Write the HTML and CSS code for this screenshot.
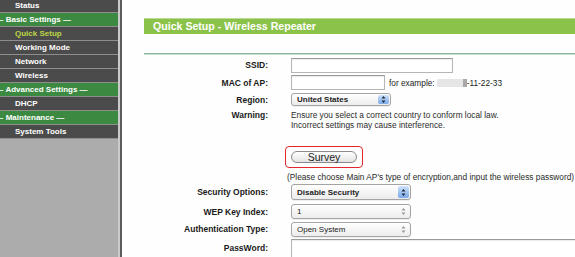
FILE: index.html
```html
<!DOCTYPE html>
<html lang="en">
<head>
    <meta charset="UTF-8">
    <meta name="viewport" content="width=device-width, initial-scale=1.0">
    <title>Quick Setup - Wireless Repeater</title>
    <link rel="stylesheet" href="styles.css">
</head>
<body>
    <div class="page">
        <nav class="menu">
            <div class="item first">Status</div>
            <div class="group">&ndash; Basic Settings &mdash;</div>
            <div class="item active">Quick Setup</div>
            <div class="item">Working Mode</div>
            <div class="item">Network</div>
            <div class="item">Wireless</div>
            <div class="group">&ndash; Advanced Settings &mdash;</div>
            <div class="item">DHCP</div>
            <div class="group">&ndash; Maintenance &mdash;</div>
            <div class="item">System Tools</div>
        </nav>
        <div class="divider"></div>

        <main class="content">
            <div class="title-bar">Quick Setup - Wireless Repeater</div>
            <div class="rule"></div>

            <form class="setup">
                <div class="row r-ssid">
                    <label>SSID:</label>
                    <div class="field"><input type="text" class="text ssid"></div>
                </div>
                <div class="row r-mac">
                    <label>MAC of AP:</label>
                    <div class="field">
                        <input type="text" class="text mac">
                        <span class="hint">for example:<span class="blur"></span><span class="blur dark"></span>-11-22-33</span>
                    </div>
                </div>
                <div class="row r-region">
                    <label>Region:</label>
                    <div class="field">
                        <div class="select region">
                            <span>United States</span>
                            <span class="stepper blue">
                                <svg width="5" height="9" viewBox="0 0 5 9"><path d="M0.5 3.5 L2.5 1 L4.5 3.5 Z M0.5 5.5 L2.5 8 L4.5 5.5 Z" fill="#1d2a3a"/></svg>
                            </span>
                        </div>
                    </div>
                </div>
                <div class="row r-warning">
                    <label>Warning:</label>
                    <div class="field note">
                        Ensure you select a correct country to conform local law.<br>
                        Incorrect settings may cause interference.
                    </div>
                </div>

                <div class="survey-wrap">
                    <div class="survey-box">
                        <button type="button" class="survey">Survey</button>
                    </div>
                    <p class="note please">(Please choose Main AP's type of encryption,and input the wireless password)</p>
                </div>

                <div class="row r-sec">
                    <label>Security Options:</label>
                    <div class="field">
                        <div class="select opt">
                            <span>Disable Security</span>
                            <span class="stepper blue">
                                <svg width="5" height="9" viewBox="0 0 5 9"><path d="M0.5 3.5 L2.5 1 L4.5 3.5 Z M0.5 5.5 L2.5 8 L4.5 5.5 Z" fill="#1d2a3a"/></svg>
                            </span>
                        </div>
                    </div>
                </div>
                <div class="row r-wep">
                    <label>WEP Key Index:</label>
                    <div class="field">
                        <div class="select opt flat">
                            <span>1</span>
                            <span class="stepper">
                                <svg width="5" height="9" viewBox="0 0 5 9"><path d="M0.5 3.5 L2.5 1 L4.5 3.5 Z M0.5 5.5 L2.5 8 L4.5 5.5 Z" fill="#9a9a9a"/></svg>
                            </span>
                        </div>
                    </div>
                </div>
                <div class="row r-auth">
                    <label>Authentication Type:</label>
                    <div class="field">
                        <div class="select opt flat">
                            <span>Open System</span>
                            <span class="stepper">
                                <svg width="5" height="9" viewBox="0 0 5 9"><path d="M0.5 3.5 L2.5 1 L4.5 3.5 Z M0.5 5.5 L2.5 8 L4.5 5.5 Z" fill="#9a9a9a"/></svg>
                            </span>
                        </div>
                    </div>
                </div>
                <div class="row r-pass">
                    <label>PassWord:</label>
                    <div class="field"><input type="text" class="text pass"></div>
                </div>
            </form>
        </main>
    </div>
</body>
</html>
```

FILE: styles.css
```css
body {
    margin: 0;
    background-color: #fdfefd;
    font-family: "Liberation Sans", Arial, sans-serif;
    overflow: hidden;
}
.page {
    display: flex;
    height: 257px;
}

/* left menu */
.menu {
    width: 118px;
    flex: none;
    background-color: #acacac;
    border-right: 2px solid #cbcbcb;
    font-size: 8px;
    font-weight: bold;
}
.item {
    height: 13px;
    line-height: 13px;
    padding-left: 15px;
    background-color: #4b4b4b;
    color: #fff;
    border-bottom: 1px solid #8e8e8e;
}
.item.first {
    height: 12px;
    line-height: 11px;
}
.item.active {
    color: #bcd646;
}
.group {
    height: 13px;
    line-height: 13px;
    padding-left: 1px;
    margin-left: -2px;
    background-color: #3c8a41;
    color: #fff;
    border-bottom: 1px solid #8e8e8e;
}
.divider {
    width: 2px;
    flex: none;
    background-color: #5c5c5c;
}

/* content */
.content {
    flex: 1;
    padding-left: 22px;
    padding-top: 18px;
    min-width: 0;
}
.title-bar {
    height: 15px;
    line-height: 15px;
    padding-left: 9px;
    background-color: #8bc34a;
    border-top: 1px solid #b9db95;
    color: #fff;
    font-size: 10.6px;
    font-weight: bold;
}
.rule {
    margin-top: 19px;
    height: 1px;
    background-color: #8db89c;
    border-bottom: 1px solid #c9ddd0;
}

.setup {
    font-size: 8.3px;
    color: #222;
}
.row {
    display: flex;
    align-items: center;
}
.row label {
    width: 124px;
    flex: none;
    text-align: right;
    font-weight: bold;
    font-size: 8.5px;
    color: #1a1a1a;
    margin-right: 23px;
}
.field {
    display: flex;
    align-items: center;
}
.r-ssid { height: 18px; margin-top: 1px; }
.r-mac { height: 17px; }
.r-region { height: 17px; }
.r-warning {
    align-items: flex-start;
    margin-top: 2px;
}
.r-warning label { line-height: 10px; }
.note {
    color: #2b2b2b;
    line-height: 10px;
}

.text {
    box-sizing: border-box;
    height: 15px;
    margin: 0;
    padding: 0 3px;
    border: 1px solid #b5b5b5;
    border-top-color: #9a9a9a;
    background-color: #fff;
    box-shadow: inset 0 1px 1px rgba(0, 0, 0, 0.08);
}
.ssid { width: 162px; }
.mac { width: 94px; }
.pass { width: 300px; height: 24px; }

.hint {
    margin-left: 4px;
    display: flex;
    align-items: center;
}
.blur {
    display: inline-block;
    width: 26px;
    height: 8px;
    margin-left: 2px;
    background-color: #e6e6e6;
}
.blur.dark {
    width: 4px;
    margin-left: 0;
    background-color: #a9a9a9;
}

.select {
    box-sizing: border-box;
    display: flex;
    align-items: center;
    justify-content: space-between;
    height: 13px;
    padding-left: 5px;
    border: 1px solid #a4a4a4;
    border-radius: 3px;
    background: linear-gradient(#ffffff, #ececec);
    color: #222;
    font-size: 8px;
    font-weight: bold;
    box-shadow: 0 1px 0 rgba(0, 0, 0, 0.06);
}
.select.region { width: 100px; }
.select.opt { width: 120px; height: 16px; }
.select.flat { height: 15px; font-weight: normal; }
.stepper {
    display: flex;
    align-items: center;
    justify-content: center;
    width: 11px;
    align-self: stretch;
    margin: 1px;
    border-radius: 2px;
}
.stepper.blue {
    background: linear-gradient(#cfe2fb, #7aa9e9);
}

/* survey */
.survey-wrap {
    margin-top: 16px;
    margin-left: 141px;
}
.survey-box {
    box-sizing: border-box;
    width: 78px;
    height: 22px;
    padding: 4px 0 0 5px;
    border: 1.5px solid #e2282d;
    border-radius: 4px;
}
.survey {
    width: 66px;
    height: 12px;
    padding: 0;
    border: 1px solid #8a8a8a;
    border-radius: 7px;
    background: linear-gradient(#ffffff, #e3e3e3);
    font-family: "Liberation Sans", Arial, sans-serif;
    font-size: 10.5px;
    line-height: 10px;
    color: #222;
}
.please {
    margin: 4px 0 0 2px;
    white-space: nowrap;
}

.r-sec { height: 16px; margin-top: 2px; }
.r-wep { height: 15px; margin-top: 4px; }
.r-auth { height: 16px; margin-top: 2px; }
.r-pass { margin-top: 2px; align-items: flex-start; }
.r-pass label { margin-top: 4px; }
```
